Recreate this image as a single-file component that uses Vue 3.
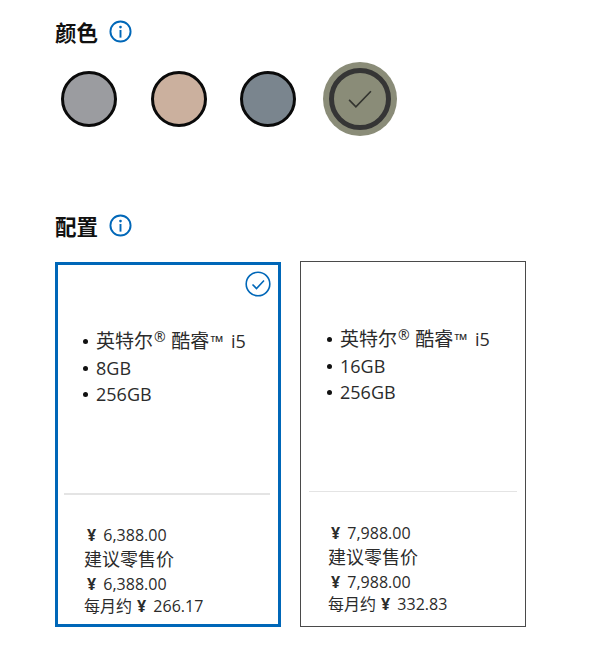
<script setup>
const swatches = [
  { name: 'silver', color: '#9b9ca0' },
  { name: 'sand', color: '#cbb09e' },
  { name: 'blue', color: '#7a858e' },
]
const cards = [
  { id: 1, selected: true, ram: '8GB', price: '6,388.00', monthly: '266.17' },
  { id: 2, selected: false, ram: '16GB', price: '7,988.00', monthly: '332.83' },
]
</script>

<template>
  <main class="page">
    <section class="color-section">
      <h2 class="heading">
        <span>颜色</span>
        <svg class="info" viewBox="0 0 24 24" aria-hidden="true">
          <circle cx="12" cy="12" r="10.5" fill="none" stroke="#0067b8" stroke-width="2" />
          <circle cx="12" cy="7.4" r="1.4" fill="#0067b8" />
          <rect x="11" y="10.4" width="2" height="8" fill="#0067b8" />
        </svg>
      </h2>
      <div class="swatches">
        <span v-for="s in swatches" :key="s.name" class="swatch-cell">
          <span class="swatch" :style="{ background: s.color }"></span>
        </span>
        <span class="swatch-active">
          <span class="swatch-ring">
            <svg class="swatch-check" viewBox="0 0 28 22" aria-hidden="true">
              <path d="M2 12 L9.500 19.500 L26 2.500" fill="none" stroke="#33342f" stroke-width="1.800" />
            </svg>
          </span>
        </span>
      </div>
    </section>

    <section class="config-section">
      <h2 class="heading">
        <span>配置</span>
        <svg class="info" viewBox="0 0 24 24" aria-hidden="true">
          <circle cx="12" cy="12" r="10.5" fill="none" stroke="#0067b8" stroke-width="2" />
          <circle cx="12" cy="7.4" r="1.4" fill="#0067b8" />
          <rect x="11" y="10.4" width="2" height="8" fill="#0067b8" />
        </svg>
      </h2>
      <div class="cards">
        <article v-for="c in cards" :key="c.id" class="card" :class="{ selected: c.selected }">
          <svg v-if="c.selected" class="card-check" viewBox="0 0 26 26" aria-hidden="true">
            <circle cx="13" cy="13" r="11.800" fill="none" stroke="#0067b8" stroke-width="1.600" />
            <path d="M7.500 13.500 L11.500 17.500 L19 9.500" fill="none" stroke="#0067b8" stroke-width="1.600" />
          </svg>
          <ul class="specs">
            <li><span class="cjk">英特尔</span><sup class="reg">®</sup> <span class="cjk">酷睿</span><span class="tm">™</span> i5</li>
            <li>{{ c.ram }}</li>
            <li>256GB</li>
          </ul>
          <div class="divider"></div>
          <div class="prices">
            <div class="price"><span class="yen">¥</span> {{ c.price }}</div>
            <div class="label">建议零售价</div>
            <div class="price"><span class="yen">¥</span> {{ c.price }}</div>
            <div class="monthly">每月约<span class="yen yen-monthly">¥</span> {{ c.monthly }}</div>
          </div>
        </article>
      </div>
    </section>
  </main>
</template>

<style>
html, body { margin: 0; background: #fff; }
</style>

<style scoped>
.page {
  width: 600px;
  height: 655px;
  box-sizing: border-box;
  padding: 18px 0 0 55px;
  overflow: hidden;
  font-family: "Open Sans", "Noto Sans CJK SC", sans-serif;
  color: #2b2b2b;
}
.heading {
  display: flex;
  align-items: center;
  gap: 11px;
  margin: 0;
  height: 30px;
  font-size: 21.500px;
  line-height: 30px;
  font-weight: 700;
  color: #111;
}
.info { width: 23px; height: 23px; margin-top: -3px; }
.swatches {
  display: flex;
  align-items: center;
  height: 74px;
  margin-top: 14px;
}
.swatch-cell { width: 89.500px; display: flex; padding-left: 6px; box-sizing: border-box; }
.swatch {
  width: 56px;
  height: 56px;
  box-sizing: border-box;
  border: 3px solid #0a0a0a;
  border-radius: 50%;
}
.swatch-active {
  width: 74px;
  height: 74px;
  margin-left: -0.500px;
  border-radius: 50%;
  background: #8a8c78;
  display: flex;
  align-items: center;
  justify-content: center;
}
.swatch-ring {
  width: 62px;
  height: 62px;
  box-sizing: border-box;
  border: 5px solid #353535;
  border-radius: 50%;
  display: flex;
  align-items: center;
  justify-content: center;
}
.swatch-check { width: 26px; height: 20px; }
.config-section { margin-top: 76px; }
.cards {
  display: flex;
  gap: 19px;
  margin-top: 19px;
  align-items: flex-end;
}
.card {
  position: relative;
  width: 226px;
  height: 366px;
  box-sizing: border-box;
  border: 1.500px solid #4a4a4a;
  padding: 63.500px 8px 0;
  display: flex;
  flex-direction: column;
}
.card.selected {
  height: 365px;
  border: 3px solid #0067b8;
  padding: 63px 8px 0 6px;
}
.card-check {
  position: absolute;
  top: 6px;
  right: 7px;
  width: 26px;
  height: 26px;
}
.specs {
  list-style: none;
  margin: 0;
  padding: 0 0 0 18px;
  font-size: 18px;
  line-height: 26px;
  height: 165px;
}
.selected .specs { padding-left: 19px; }
.specs li { position: relative; padding-left: 13px; white-space: nowrap; }
.specs li::before {
  content: "";
  position: absolute;
  left: 0;
  top: 11px;
  width: 5px;
  height: 5px;
  border-radius: 50%;
  background: #111;
}
.cjk { font-size: 19px; }
.tm { font-size: 17px; margin: 0 3px 0 1px; }
.reg { font-size: 14px; line-height: 0; vertical-align: 6px; margin: 0 1px; }
.divider { height: 1.500px; background: #e4e4e4; }
.prices {
  margin-top: 29.500px;
  padding-left: 19px;
  font-size: 16px;
}
.selected .prices { padding-left: 20px; }
.price { height: 22px; line-height: 22px; padding-left: 3px; }
.label { height: 27px; line-height: 27px; font-size: 18px; }
.monthly { height: 23px; line-height: 23px; white-space: nowrap; }
.yen { font-size: 16px; font-weight: 700; margin-right: 3px; }
.yen-monthly { margin: 0 3px 0 5px; }
</style>
